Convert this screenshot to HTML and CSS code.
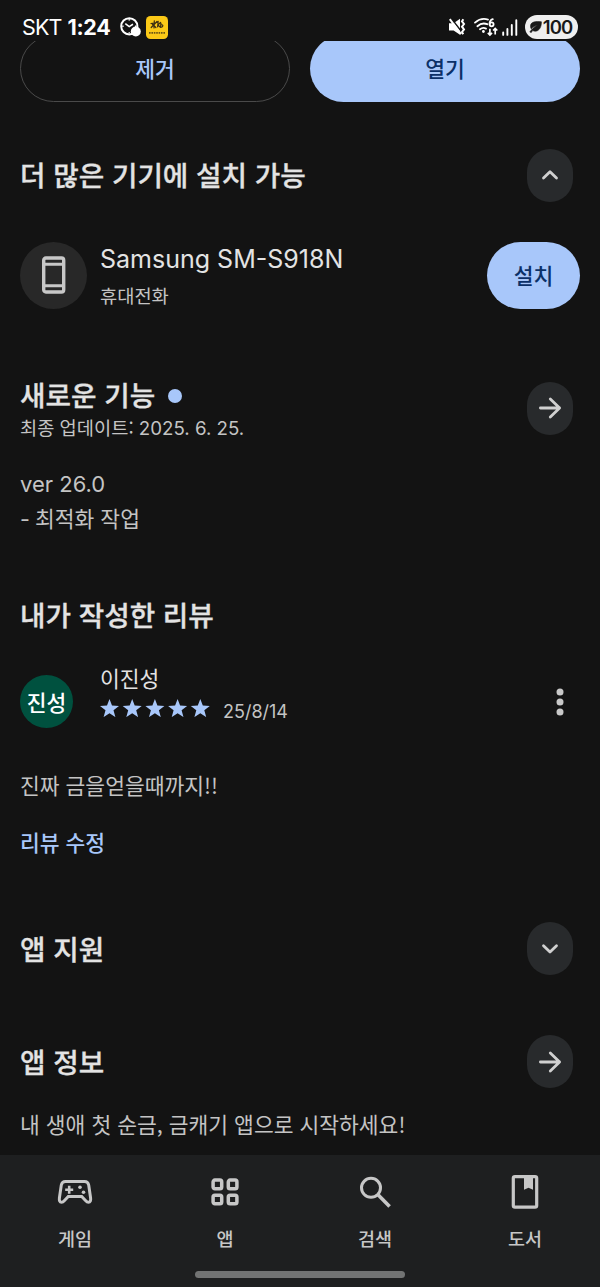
FILE: index.html
```html
<!DOCTYPE html>
<html lang="ko">
<head>
<meta charset="utf-8">
<meta name="viewport" content="width=device-width">
<title>앱 상세</title>
<link rel="stylesheet" href="styles.css">
</head>
<body>
<div class="screen">
  <header class="status">
    <div class="status-left">
      <span class="carrier">SKT</span>
      <span class="time">1:24</span>
      <svg class="clock" width="21" height="20" viewBox="0 0 21 20">
        <circle cx="9.3" cy="9.3" r="8.1" fill="none" stroke="#fff" stroke-width="2"/>
        <path d="M5.3 6.6 9.2 9.6 13 7.2M9.3 2.2v1.3M9.3 15.2v1.3M2.3 9.3h1.3M15 9.3h1.3" fill="none" stroke="#fff" stroke-width="1.6"/>
        <circle cx="15.8" cy="14.5" r="5" fill="#fff"/>
      </svg>
      <svg class="bank" width="22" height="23" viewBox="0 0 22 23">
        <rect width="22" height="23" rx="4.5" fill="#fbc917"/>
        <g fill="none" stroke="#3c2f13" stroke-width="1.2" stroke-linecap="round">
          <path d="M5 7.5l6-1M8.3 4.8 8 12M11 5.5 5.2 11.5M6.2 8l3.7 3.5M12.2 5.3l-.6 5.5M14.5 6.5l-2.500 2.400 2.400 2.400M15 7l-.5 4c2.500.8 3.500-2.800.4-2.200"/>
          <path d="M3 16.800h16.500" stroke-width="1.800" stroke-dasharray="1.600 .8" stroke-linecap="butt" opacity=".75"/>
        </g>
      </svg>
    </div>
    <div class="status-right">
      <svg width="17" height="18" viewBox="0 0 17 18">
        <path d="M0 5.300h4.600L11 .8v15.900L4.600 12.400H0z" fill="#fff"/>
        <path d="M2 0 13 14.300" stroke="#141414" stroke-width="1.500"/>
        <path d="M.8 1.200 12 16.200" stroke="#fff" stroke-width="2"/>
        <path d="M14.300 1.200l-1.300 2.200 2 2.600-2 2.700 2 2.700-2 2.600 1.200 2.300" fill="none" stroke="#fff" stroke-width="2"/>
      </svg>
      <svg class="wifi" width="24" height="19" viewBox="0 0 24 19">
        <g fill="none" stroke="#fff" stroke-width="1.800" stroke-linecap="round">
          <path d="M1 4.600Q7-.6 14 1.600M3.400 8.200Q8 4.200 13.200 6.200M6 11.200Q9 8.900 12 10.600"/>
          <path d="M18.800 1.200Q15.400 2.300 15.600 6.200"/>
          <circle cx="17.600" cy="6.300" r="2"/>
          <path d="M15.900 10.800v6M13.800 14.900l2.100 2.100 2.100-2.100M21.200 16.600v-6M19.100 12.500l2.100-2.100 2.100 2.100" stroke-width="1.700" stroke-linecap="butt"/>
        </g>
        <circle cx="9.400" cy="13.500" r="1.400" fill="#fff"/>
      </svg>
      <svg class="signal" width="16" height="17" viewBox="0 0 16 17">
        <path d="M1.200 13.500v2.400M5.400 10v5.900M9.800 6v9.900M14.300 1.200v14.700" stroke="#fff" stroke-width="1.900" stroke-linecap="round"/>
      </svg>
      <div class="battery">
        <svg width="13" height="12" viewBox="0 0 13 12">
          <path d="M12.400.8C7 .3 1.600.4 1.500 5.200c0 1.200.3 2 .8 2.700C4 6 6 5 8.400 4.300 5 6.200 2.700 8.400.8 11l1.500.5 1.300-1.900C9 12 12.600 7 12.400.8z" fill="#191919" stroke="#191919" stroke-width=".6"/>
        </svg>
        <span>100</span>
      </div>
    </div>
  </header>

  <main class="content">
    <div class="actions">
      <button class="btn outline">제거</button>
      <button class="btn filled">열기</button>
    </div>

    <section class="devices">
      <div class="head">
        <h2>더 많은 기기에 설치 가능</h2>
        <span class="chip"><svg width="24" height="24" viewBox="0 0 24 24"><path d="M5.500 15 12 8.700 18.500 15"/></svg></span>
      </div>
      <div class="device">
        <span class="device-icon">
          <svg width="24" height="38" viewBox="0 0 24 38">
            <rect x="1.700" y="2" width="20" height="34" rx="2.200" fill="none" stroke="#c8c8c8" stroke-width="3.400"/>
            <path d="M2 8.200h20M2 29.800h20" stroke="#c8c8c8" stroke-width="3"/>
          </svg>
        </span>
        <div class="device-text">
          <div class="device-name">Samsung SM-S918N</div>
          <div class="device-type">휴대전화</div>
        </div>
        <button class="install">설치</button>
      </div>
    </section>

    <section class="news">
      <div class="head">
        <div class="news-title">
          <h2>새로운 기능<i class="dot"></i></h2>
          <p class="updated">최종 업데이트: <span class="latin">2025. 6. 25.</span></p>
        </div>
        <span class="chip"><svg width="24" height="24" viewBox="0 0 24 24"><path d="M2.400 12h19.200M12.300 2.900 21.600 12l-9.300 9.100"/></svg></span>
      </div>
      <div class="notes">
        <p class="latin">ver 26.0</p>
        <p><span class="dash latin">-</span>최적화 작업</p>
      </div>
    </section>

    <section class="review">
      <h2>내가 작성한 리뷰</h2>
      <div class="author">
        <span class="avatar">진성</span>
        <div class="author-text">
          <div class="name">이진성</div>
          <div class="rating">
            <svg width="110" height="18" viewBox="0 0 110 18" fill="#a8c7fa">
              <defs><path id="star" d="M9.500 0l2.500 6.600 7 .3-5.500 4.400 1.900 6.800-5.900-3.900-5.900 3.900 1.900-6.800L0 6.900l7-.3z"/></defs>
              <use href="#star"/><use href="#star" x="22.700"/><use href="#star" x="45.400"/><use href="#star" x="68.100"/><use href="#star" x="90.800"/>
            </svg>
            <span class="date">25/8/14</span>
          </div>
        </div>
        <svg class="more" width="8" height="28" viewBox="0 0 8 28" fill="#c8c8c8"><circle cx="4" cy="4" r="3.500"/><circle cx="4" cy="14" r="3.500"/><circle cx="4" cy="24" r="3.500"/></svg>
      </div>
      <p class="review-body">진짜 금을얻을때까지!!</p>
      <a class="edit">리뷰 수정</a>
    </section>

    <section class="support">
      <div class="head">
        <h2>앱 지원</h2>
        <span class="chip"><svg width="24" height="24" viewBox="0 0 24 24"><path d="M5.500 8.700 12 15l6.500-6.300"/></svg></span>
      </div>
    </section>

    <section class="about">
      <div class="head">
        <h2>앱 정보</h2>
        <span class="chip"><svg width="24" height="24" viewBox="0 0 24 24"><path d="M2.400 12h19.200M12.300 2.900 21.600 12l-9.300 9.100"/></svg></span>
      </div>
      <p class="about-body">내 생애 첫 순금, 금캐기 앱으로 시작하세요!</p>
    </section>
  </main>

  <nav class="nav">
    <div class="tabs">
      <div class="tab">
        <svg width="36" height="36" viewBox="0 0 36 36" fill="none" stroke="#c7c7c7">
          <path d="M8.500 7.500h19q3.500 0 4.200 3.500l1.900 13q.5 4.200-2.100 4.200-1.500 0-3-1.700L24.700 22.500H11.300l-3.800 4q-1.500 1.700-3 1.700-2.600 0-2.100-4.200l1.900-13Q5 7.500 8.500 7.500z" stroke-width="3"/>
          <path d="M12.200 11.800v8M8.200 15.800h8" stroke-width="2.600"/>
          <circle cx="23" cy="13.300" r="1.800" fill="#c7c7c7" stroke="none"/><circle cx="26.500" cy="18.300" r="1.800" fill="#c7c7c7" stroke="none"/>
        </svg>
        <span>게임</span>
      </div>
      <div class="tab">
        <svg width="36" height="36" viewBox="0 0 36 36" fill="none" stroke="#c7c7c7" stroke-width="3.500">
          <rect x="6.100" y="6.100" width="8.600" height="8.600" rx="1.800"/><rect x="21.300" y="6.100" width="8.600" height="8.600" rx="1.800"/>
          <rect x="6.100" y="21.200" width="8.600" height="8.600" rx="1.800"/><rect x="21.300" y="21.200" width="8.600" height="8.600" rx="1.800"/>
        </svg>
        <span>앱</span>
      </div>
      <div class="tab">
        <svg width="36" height="36" viewBox="0 0 36 36" fill="none" stroke="#c7c7c7" stroke-width="3">
          <circle cx="14" cy="13.800" r="9.500"/><path d="M20.800 20.600 32.600 32.400" stroke-width="3.600"/>
        </svg>
        <span>검색</span>
      </div>
      <div class="tab">
        <svg width="36" height="36" viewBox="0 0 36 36" fill="none" stroke="#c7c7c7">
          <rect x="6.300" y="2.600" width="23.400" height="30.500" rx="1.700" stroke-width="3.200"/>
          <path d="M17 3h9v12.800l-4.500-2-4.500 2z" fill="#c7c7c7" stroke="none"/>
        </svg>
        <span>도서</span>
      </div>
    </div>
    <div class="handle"></div>
  </nav>
</div>
</body>
</html>
```
FILE: styles.css
```css
* { box-sizing: border-box; }
body {
  margin: 0;
  background: #131313;
  color: #e3e3e3;
  font-family: "Noto Sans CJK KR", sans-serif;
}
h2, p { margin: 0; }
button { border: 0; padding: 0; font-family: inherit; }
svg { display: block; flex: none; }

.screen {
  width: 600px;
  height: 1287px;
  display: flex;
  flex-direction: column;
  overflow: hidden;
}

/* status bar */
.status {
  height: 41px;
  flex: none;
  display: flex;
  justify-content: space-between;
  padding: 14px 22px 0;
  color: #fff;
  font-family: Inter, sans-serif;
}
.status-left, .status-right { display: flex; align-items: center; height: 26px; }
.carrier { font-size: 21.5px; letter-spacing: -0.9px; }
.time { font-size: 21.5px; font-weight: 700; margin-left: 6px; letter-spacing: -0.3px; }
.clock { margin-left: 10px; }
.bank { margin-left: 5px; }
.wifi { margin-left: 8px; }
.signal { margin-left: 4px; }
.battery {
  display: flex;
  align-items: center;
  justify-content: center;
  gap: 1px;
  width: 53px;
  height: 24px;
  margin-left: 7px;
  border-radius: 12px;
  background: #efefef;
  color: #191919;
  font-size: 18.5px;
  font-weight: 600;
  letter-spacing: -0.9px;
  padding-right: 2px;
}

.content { flex: 1; padding: 0 20px; min-height: 0; }

.actions {
  display: flex;
  align-items: flex-end;
  gap: 20px;
  height: 60.5px;
  overflow: hidden;
}
.btn {
  width: 270px;
  height: 66.5px;
  flex: none;
  border-radius: 34px;
  padding-bottom: 2px;
  font-size: 21.5px;
  font-weight: 500;
}
.outline { background: none; border: 1.5px solid #4a4a4a; color: #a8c7fa; }
.filled { background: #a8c7fa; color: #0b3068; }

h2 {
  font-size: 27.7px;
  font-weight: 500;
  line-height: 40px;
  white-space: nowrap;
  -webkit-text-stroke: 0.3px currentColor;
}
.head {
  display: flex;
  align-items: center;
  justify-content: space-between;
  height: 53px;
  padding-right: 7px;
}
.head > h2 { padding-bottom: 2px; }
.chip {
  width: 46px;
  height: 53px;
  border-radius: 23px;
  background: #282a2c;
  display: flex;
  align-items: center;
  justify-content: center;
}
.chip path {
  fill: none;
  stroke: #d0d0d0;
  stroke-width: 2.8;
  stroke-linecap: round;
  stroke-linejoin: round;
}

.devices { padding-top: 47px; }
.device { display: flex; align-items: center; height: 67px; margin-top: 40px; }
.device-icon {
  width: 67px;
  height: 67px;
  border-radius: 50%;
  background: #282828;
  display: flex;
  align-items: center;
  justify-content: center;
}
.device-text { flex: 1; margin-left: 13px; padding-top: 4px; }
.device-name {
  font-family: Inter, sans-serif;
  font-size: 25px;
  line-height: 36px;
}
.device-type { font-size: 18.7px; line-height: 36px; color: #c4c4c4; }
.install {
  width: 93px;
  height: 67px;
  border-radius: 34px;
  padding-bottom: 2px;
  background: #a8c7fa;
  color: #0b3068;
  font-size: 21.5px;
  font-weight: 500;
}

.news { padding-top: 73px; }
.latin { font-family: Inter, sans-serif; }
.news-title h2 { margin-top: -1px; }
.dot {
  display: inline-block;
  width: 14px;
  height: 14px;
  margin-left: 13px;
  border-radius: 50%;
  background: #a8c7fa;
  vertical-align: 3px;
}
.updated { font-size: 18.7px; line-height: 26px; color: #c4c4c4; }
.notes { margin-top: 32.5px; font-size: 21.5px; color: #c4c4c4; }
.notes p { height: 34px; line-height: 34px; }
.notes p.latin { font-size: 22px; }
.dash { display: inline-block; width: 15px; }

.review { padding-top: 59px; }
.author { display: flex; align-items: center; height: 54px; margin-top: 40.5px; }
.avatar {
  width: 53px;
  height: 53px;
  border-radius: 50%;
  background: #00513f;
  color: #fff;
  font-size: 21.5px;
  font-weight: 500;
  padding-bottom: 1px;
  display: flex;
  align-items: center;
  justify-content: center;
}
.author-text { flex: 1; margin-left: 27px; margin-bottom: 19px; }
.name { font-size: 21.5px; line-height: 32px; }
.rating { display: flex; align-items: center; height: 28px; }
.date {
  font-family: Inter, sans-serif;
  font-size: 18px;
  margin-left: 13px;
  padding-top: 6px;
  color: #c4c4c4;
}
.more { margin-right: 16px; }
.review-body { margin-top: 40.5px; font-size: 21.5px; line-height: 32px; color: #c4c4c4; }
.edit {
  display: block;
  margin-top: 25px;
  font-size: 21.5px;
  font-weight: 500;
  line-height: 32px;
  color: #a8c7fa;
}

.support { padding-top: 64px; }
.about { padding-top: 60px; }
.about-body { margin-top: 20px; font-size: 21.5px; line-height: 32px; color: #c4c4c4; }

/* bottom navigation */
.nav { height: 132px; flex: none; background: #1e1f20; }
.tabs { display: flex; padding-top: 19px; height: 116px; }
.tab {
  flex: 1;
  display: flex;
  flex-direction: column;
  align-items: center;
  color: #c7c7c7;
  font-size: 18.5px;
  font-weight: 500;
  line-height: 26px;
  gap: 15px;
}
.handle { width: 210px; height: 7px; margin: 0 auto; border-radius: 4px; background: #727373; }
```
